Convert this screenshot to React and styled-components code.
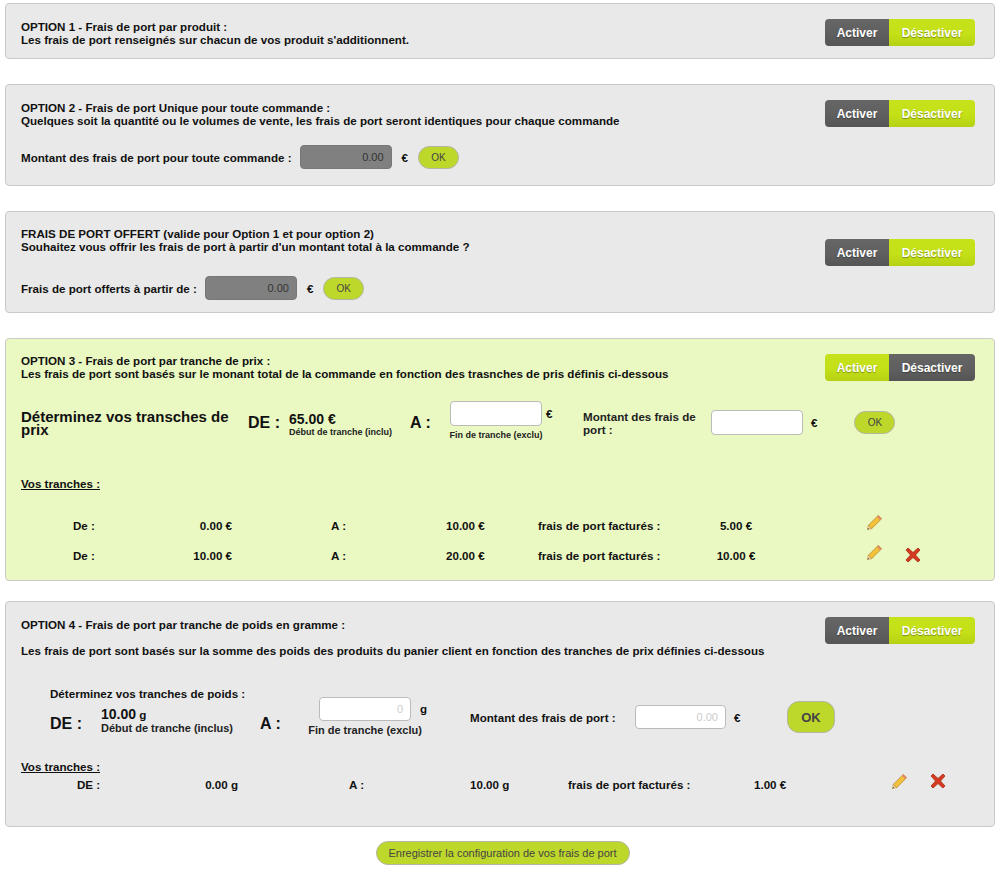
import styled, { createGlobalStyle } from 'styled-components';

const Global = createGlobalStyle`
  body {
    margin: 0;
    background: #fff;
    font-family: "Liberation Sans", Arial, sans-serif;
    color: #111;
  }
`;

const Page = styled.div`
  padding: 3px 9px 12px 5px;
  display: flex;
  flex-direction: column;
`;

const Panel = styled.div`
  background: ${(p) => (p.$active ? '#eaf8c2' : '#e9e9e9')};
  border: 1px solid #c9c9c9;
  border-radius: 4px;
  padding: 15px 19px 0 15px;
  min-height: ${(p) => p.$h}px;
  box-sizing: border-box;
  margin-bottom: ${(p) => p.$mb ?? 25}px;
`;

const Head = styled.div`
  display: flex;
  justify-content: space-between;
  align-items: flex-start;
`;

const Title = styled.div`
  font-size: 11.6px;
  font-weight: bold;
  line-height: 13px;
  padding-top: ${(p) => p.$pt ?? 0}px;
  p { margin: 0; }
  p + p { margin-top: ${(p) => p.$gap ?? 0}px; }
`;

const Toggle = styled.div`
  display: flex;
  margin-top: ${(p) => p.$mt ?? 0}px;
  border-radius: 4px;
  overflow: hidden;
  height: 27px;
`;

const ToggleBtn = styled.div`
  display: flex;
  align-items: center;
  justify-content: center;
  width: ${(p) => p.$w}px;
  font-size: 12px;
  font-weight: bold;
  color: #fff;
  text-shadow: 0 1px 1px rgba(0, 0, 0, 0.35);
  background: ${(p) =>
    p.$on
      ? 'linear-gradient(#c6e21a, #c4e017 55%, #b6d113)'
      : 'linear-gradient(#666, #5f5f5f 55%, #555)'};
`;

const Row = styled.div`
  display: flex;
  align-items: center;
  font-size: 11.6px;
  font-weight: bold;
  margin-top: ${(p) => p.$mt ?? 0}px;
`;

const Field = styled.div`
  width: ${(p) => p.$w ?? 92}px;
  height: ${(p) => p.$h ?? 24}px;
  box-sizing: border-box;
  border: 1px solid ${(p) => (p.$dark ? '#777' : '#bbb')};
  border-radius: 4px;
  background: ${(p) => (p.$dark ? '#808080' : '#fff')};
  color: ${(p) => (p.$dark ? '#333' : '#ccc')};
  font-weight: normal;
  font-size: 11px;
  display: flex;
  align-items: center;
  justify-content: flex-end;
  padding-right: 7px;
`;

const Ok = styled.div`
  width: ${(p) => p.$w ?? 41}px;
  height: ${(p) => p.$h ?? 23}px;
  box-sizing: border-box;
  border: 1px solid #b5b5a5;
  border-radius: 12px;
  background: #bed72b;
  color: #444;
  font-size: ${(p) => (p.$big ? 13 : 10)}px;
  font-weight: ${(p) => (p.$big ? 'bold' : 'normal')};
  display: flex;
  align-items: center;
  justify-content: center;
`;

const Gap = styled.span`
  display: inline-block;
  width: ${(p) => p.$w}px;
  flex-shrink: 0;
`;

const Block = styled.div`
  display: flex;
  flex-direction: column;
  width: ${(p) => p.$w}px;
  flex-shrink: 0;
  align-items: ${(p) => p.$align ?? 'flex-start'};
`;

const Big = styled.span`
  font-size: ${(p) => p.$s ?? 16}px;
  font-weight: bold;
`;

const Sub = styled.span`
  font-size: ${(p) => p.$s ?? 9}px;
  font-weight: bold;
  color: #222;
  white-space: nowrap;
`;

const Heading = styled.div`
  font-size: 15px;
  font-weight: bold;
  line-height: 13px;
  width: ${(p) => p.$w}px;
`;

const Underline = styled.div`
  font-size: 11.6px;
  font-weight: bold;
  text-decoration: underline;
  margin-top: ${(p) => p.$mt}px;
`;

const Grid = styled.div`
  display: grid;
  grid-template-columns: ${(p) => p.$cols};
  padding-left: ${(p) => p.$pl}px;
  margin-top: ${(p) => p.$mt}px;
  row-gap: ${(p) => p.$gap ?? 0}px;
  font-size: 11.6px;
  font-weight: bold;
  align-items: center;
`;

const Cell = styled.div`
  height: 18px;
  white-space: nowrap;
  display: flex;
  align-items: center;
  justify-content: ${(p) =>
    p.$align === 'right' ? 'flex-end' : p.$align === 'center' ? 'center' : 'flex-start'};
`;

const Save = styled.div`
  align-self: center;
  margin: 14px 0 0 5px;
  width: 254px;
  height: 24px;
  box-sizing: border-box;
  border: 1px solid #b5b5a5;
  border-radius: 12px;
  background: #bed72b;
  color: #444;
  font-size: 11px;
  display: flex;
  align-items: center;
  justify-content: center;
`;

const Pencil = () => (
  <svg width="17" height="17" viewBox="0 0 18 18">
    <path d="M13 1.5 L16.5 5 L6 15.5 L2.5 12 Z" fill="#f3c23a" stroke="#b8842a" strokeWidth="0.8" />
    <path d="M13 1.5 L16.5 5 L15 6.5 L11.5 3 Z" fill="#e08a6b" />
    <path d="M2.5 12 L6 15.5 L1.5 16.5 Z" fill="#f5deb0" stroke="#b8842a" strokeWidth="0.6" />
    <path d="M1.5 16.5 L2.3 14.7 L3.3 15.7 Z" fill="#333" />
  </svg>
);

const Cross = () => (
  <svg width="16" height="16" viewBox="0 0 16 16">
    <path
      d="M3 1 L8 5.5 L13 1 L15 3 L10.5 8 L15 13 L13 15 L8 10.5 L3 15 L1 13 L5.5 8 L1 3 Z"
      fill="#d43a1f"
      stroke="#a82a14"
      strokeWidth="0.8"
      strokeLinejoin="round"
    />
  </svg>
);

const Switch = ({ on, mt }) => (
  <Toggle $mt={mt}>
    <ToggleBtn $w={64} $on={on}>Activer</ToggleBtn>
    <ToggleBtn $w={86} $on={!on}>Désactiver</ToggleBtn>
  </Toggle>
);

const priceCols = '87px 72px 99px 115px 92px 162px 72px 94px 39px 30px';
const weightCols = '88px 73px 111px 121px 98px 186px 137px 39px 30px';

const priceRows = [
  ['0.00 €', '10.00 €', '5.00 €', false],
  ['10.00 €', '20.00 €', '10.00 €', true],
];

export default function App() {
  return (
    <Page>
      <Global />
      <Panel $h={56}>
        <Head>
          <Title $pt={1}>
            <p>OPTION 1 - Frais de port par produit :</p>
            <p>Les frais de port renseignés sur chacun de vos produit s'additionnent.</p>
          </Title>
          <Switch on={false} />
        </Head>
      </Panel>

      <Panel $h={102}>
        <Head>
          <Title $pt={1}>
            <p>OPTION 2 - Frais de port Unique pour toute commande :</p>
            <p>Quelques soit la quantité ou le volumes de vente, les frais de port seront identiques pour chaque commande</p>
          </Title>
          <Switch on={false} />
        </Head>
        <Row $mt={18}>
          Montant des frais de port pour toute commande :<Gap $w={8} />
          <Field $dark>0.00</Field>
          <Gap $w={10} />€<Gap $w={10} />
          <Ok>OK</Ok>
        </Row>
      </Panel>

      <Panel $h={102}>
        <Head>
          <Title $pt={0}>
            <p>FRAIS DE PORT OFFERT (valide pour Option 1 et pour option 2)</p>
            <p>Souhaitez vous offrir les frais de port à partir d'un montant total à la commande ?</p>
          </Title>
          <Switch on={false} mt={12} />
        </Head>
        <Row $mt={10}>
          Frais de port offerts à partir de :<Gap $w={8} />
          <Field $dark>0.00</Field>
          <Gap $w={10} />€<Gap $w={10} />
          <Ok>OK</Ok>
        </Row>
      </Panel>

      <Panel $h={243} $active $mb={20}>
        <Head>
          <Title $pt={0}>
            <p>OPTION 3 - Frais de port par tranche de prix :</p>
            <p>Les frais de port sont basés sur le monant total de la commande en fonction des trasnches de pris définis ci-dessous</p>
          </Title>
          <Switch on />
        </Head>
        <Row $mt={24}>
          <Heading $w={227}>Déterminez vos transches de prix</Heading>
          <Block $w={41}><Big>DE :</Big></Block>
          <Block $w={121}>
            <Big $s={14} style={{ marginTop: 3 }}>65.00 €</Big>
            <Sub>Début de tranche (inclu)</Sub>
          </Block>
          <Block $w={36}><Big>A :</Big></Block>
          <Block $w={100} $align="center">
            <Field $w={92} $h={25} style={{ marginTop: -4 }} />
            <Sub style={{ marginTop: 4 }}>Fin de tranche (exclu)</Sub>
          </Block>
          <Block $w={37} style={{ marginTop: -18 }}>€</Block>
          <Block $w={128} style={{ color: '#222' }}>
            Montant des frais de
            <br />
            port :
          </Block>
          <Field $w={92} $h={25} />
          <Gap $w={8} />€<Gap $w={37} />
          <Ok>OK</Ok>
        </Row>
        <Underline $mt={37}>Vos tranches :</Underline>
        <Grid $cols={priceCols} $pl={52} $mt={26} $gap={12}>
          {priceRows.map(([from, to, fee, del]) => (
            <>
              <Cell>De :</Cell>
              <Cell $align="right">{from}</Cell>
              <Cell />
              <Cell>A :</Cell>
              <Cell>{to}</Cell>
              <Cell>frais de port facturés :</Cell>
              <Cell $align="center">{fee}</Cell>
              <Cell />
              <Cell style={{ marginTop: -6 }}><Pencil /></Cell>
              <Cell>{del && <Cross />}</Cell>
            </>
          ))}
        </Grid>
      </Panel>

      <Panel $h={226} $mb={0}>
        <Head>
          <Title $pt={1} $gap={13}>
            <p>OPTION 4 - Frais de port par tranche de poids en gramme :</p>
            <p>Les frais de port sont basés sur la somme des poids des produits du panier client en fonction des tranches de prix définies ci-dessous</p>
          </Title>
          <Switch on={false} />
        </Head>
        <Row $mt={30} style={{ paddingLeft: 29 }}>Déterminez vos tranches de poids :</Row>
        <Row $mt={6} style={{ paddingLeft: 29, alignItems: 'flex-start' }}>
          <Block $w={51}><Big style={{ marginTop: 9 }}>DE :</Big></Block>
          <Block $w={159}>
            <span><Big $s={14}>10.00</Big> g</span>
            <Sub $s={11}>Début de tranche (inclus)</Sub>
          </Block>
          <Block $w={50}><Big style={{ marginTop: 9 }}>A :</Big></Block>
          <Block $w={110} $align="center">
            <Field $w={92} style={{ marginTop: -9 }}>0</Field>
            <Sub $s={11} style={{ marginTop: 3 }}>Fin de tranche (exclu)</Sub>
          </Block>
          <Block $w={50} style={{ marginTop: -4 }}>g</Block>
          <Block $w={165} style={{ marginTop: 5 }}>Montant des frais de port :</Block>
          <Field $w={91} style={{ marginTop: -1 }}>0.00</Field>
          <Block $w={61} style={{ marginTop: 5, paddingLeft: 8, boxSizing: 'border-box' }}>€</Block>
          <Ok $big $w={48} $h={32} style={{ marginTop: -5 }}>OK</Ok>
        </Row>
        <Underline $mt={24}>Vos tranches :</Underline>
        <Grid $cols={weightCols} $pl={56} $mt={2}>
          <Cell>DE :</Cell>
          <Cell $align="right">0.00 g</Cell>
          <Cell />
          <Cell>A :</Cell>
          <Cell>10.00 g</Cell>
          <Cell>frais de port facturés :</Cell>
          <Cell>1.00 €</Cell>
          <Cell style={{ marginTop: -6 }}><Pencil /></Cell>
          <Cell style={{ marginTop: -6 }}><Cross /></Cell>
        </Grid>
      </Panel>

      <Save>Enregistrer la configuration de vos frais de port</Save>
    </Page>
  );
}
